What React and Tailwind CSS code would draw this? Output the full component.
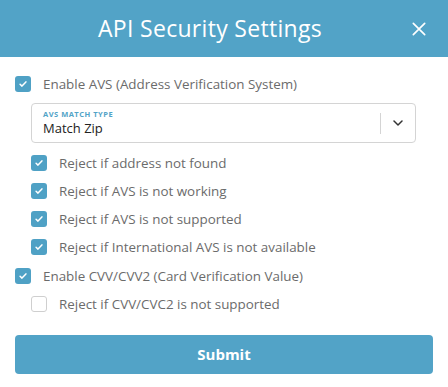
import { useState } from 'react';

const font = { fontFamily: '"Open Sans", Lato, sans-serif' };

function Check({ checked }) {
  return checked ? (
    <span className="flex h-4 w-4 shrink-0 items-center justify-center rounded-[3px] bg-[#4fa1c5]">
      <svg viewBox="0 0 12 12" className="h-[10px] w-[10px]">
        <path d="M2.5 6.3l2.3 2.2 4.7-5" fill="none" stroke="#fff" strokeWidth="1.8" strokeLinecap="round" strokeLinejoin="round" />
      </svg>
    </span>
  ) : (
    <span className="h-4 w-4 shrink-0 rounded-[3px] border border-[#cfcfcf] bg-white" />
  );
}

function Row({ checked, label, nested }) {
  return (
    <div className={`flex h-[28px] items-center gap-[12px] ${nested ? 'pl-[31px]' : 'pl-[15px]'}`}>
      <Check checked={checked} />
      <span className="text-[13.4px] text-[#6b6b6b]">{label}</span>
    </div>
  );
}

export default function App() {
  const [zip] = useState('Match Zip');
  return (
    <div className="w-[448px] h-[387px] bg-white" style={font}>
      {/* Header */}
      <div className="relative flex h-[57px] items-center justify-center bg-[#52a3c7] pr-[28px]">
        <h1 className="text-[23px] text-white tracking-[0.3px]">API Security Settings</h1>
        <svg viewBox="0 0 16 16" className="absolute right-[22px] top-[22px] h-[14px] w-[14px]">
          <path d="M1.5 1.5l13 13M14.5 1.5l-13 13" stroke="#fff" strokeWidth="1.9" strokeLinecap="round" />
        </svg>
      </div>

      <div className="pt-[13px]">
        <Row checked label="Enable AVS (Address Verification System)" />

        {/* Select */}
        <div className="mt-[5px] ml-[31px] mr-[32px] flex h-[40px] items-center rounded-[4px] border border-[#d4d4d4]">
          <div className="flex flex-1 flex-col pl-[11px] pt-[1px]">
            <span className="text-[7.5px] font-bold uppercase leading-[9px] tracking-[0.5px] text-[#52a3c7]">AVS Match Type</span>
            <span className="text-[13px] leading-[18px] text-[#222]">{zip}</span>
          </div>
          <div className="h-[21px] w-px bg-[#d4d4d4]" />
          <div className="flex w-[34px] items-center justify-center">
            <svg viewBox="0 0 10 6" className="h-[6px] w-[10px]">
              <path d="M1 1l4 4 4-4" fill="none" stroke="#333" strokeWidth="1.5" strokeLinecap="round" strokeLinejoin="round" />
            </svg>
          </div>
        </div>

        <div className="mt-[6px]">
          <Row nested checked label="Reject if address not found" />
          <Row nested checked label="Reject if AVS is not working" />
          <Row nested checked label="Reject if AVS is not supported" />
          <Row nested checked label="Reject if International AVS is not available" />
        </div>

        <div className="mt-px">
          <Row checked label="Enable CVV/CVV2 (Card Verification Value)" />
          <Row nested checked={false} label="Reject if CVV/CVC2 is not supported" />
        </div>

        <div className="px-[15px] mt-[17px]">
          <button className="h-[39px] w-full rounded-[4px] bg-[#52a3c7] text-[15px] font-bold text-white">
            Submit
          </button>
        </div>
      </div>
    </div>
  );
}
